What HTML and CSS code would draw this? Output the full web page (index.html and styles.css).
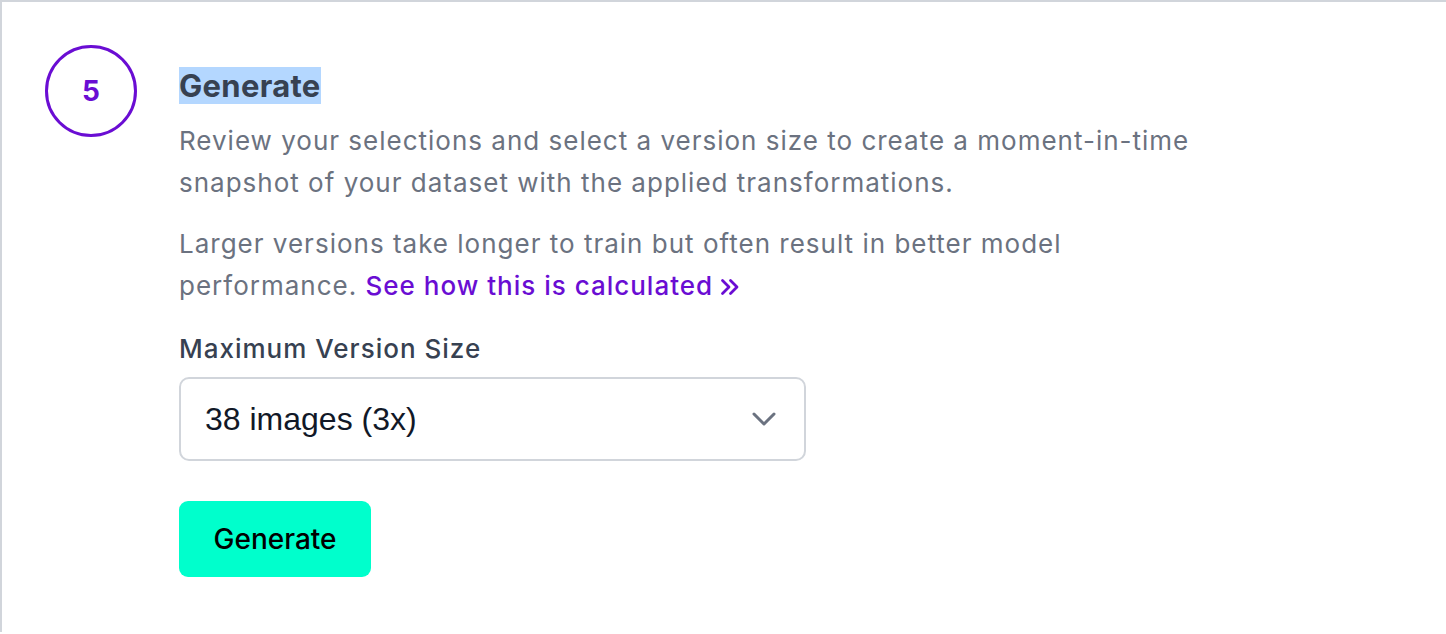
FILE: index.html
```html
<!DOCTYPE html>
<html lang="en">
<head>
<meta charset="utf-8">
<title>Generate</title>
<link rel="stylesheet" href="styles.css">
</head>
<body>
<section class="card">
  <div class="step">
    <div class="step-badge">5</div>
    <div class="step-body">
      <h2 class="step-title"><span class="selected">Generate</span></h2>
      <p class="text">Review your selections and select a version size to create a moment-in-time snapshot of your dataset with the applied transformations.</p>
      <p class="text">Larger versions take longer to train but often result in better model performance. <a class="link" href="#">See how this is calculated<svg class="link-icon" width="20" height="18" viewBox="0 0 20 18" fill="none"><path d="M2.5 2.5l6.5 6.5-6.5 6.5M10.5 2.5l6.5 6.5-6.5 6.5" stroke="currentColor" stroke-width="2.8" stroke-linecap="round" stroke-linejoin="round"/></svg></a></p>
      <label class="field-label">Maximum Version Size</label>
      <div class="select">
        <span class="select-value">38 images (3x)</span>
        <svg class="chevron" width="24" height="14" viewBox="0 0 24 14" fill="none"><path d="M2 2l10 10L22 2" stroke="#6b7280" stroke-width="3" stroke-linecap="round" stroke-linejoin="round"/></svg>
      </div>
      <button class="btn-generate" type="button">Generate</button>
    </div>
  </div>
</section>
</body>
</html>
```
FILE: styles.css
```css
html, body {
  margin: 0;
  padding: 0;
  background: #fff;
}
body {
  font-family: Inter, "Noto Sans", sans-serif;
  overflow: hidden;
}
.card {
  border-top: 2px solid #d1d5db;
  border-left: 2px solid #d1d5db;
  height: 632px;
  box-sizing: border-box;
}
.step {
  display: flex;
  align-items: flex-start;
  gap: 42px;
  padding: 43px 0 0 43px;
}
.step-badge {
  flex: none;
  width: 92px;
  height: 92px;
  box-sizing: border-box;
  border: 3px solid #6a0dd3;
  border-radius: 50%;
  display: flex;
  align-items: center;
  justify-content: center;
  color: #6a0dd3;
  font-size: 28px;
  font-weight: 700;
}
.step-body {
  width: 1016px;
  display: flex;
  flex-direction: column;
  align-items: flex-start;
}
.step-title {
  margin: 22px 0 16px;
  font-size: 31px;
  line-height: 37px;
  letter-spacing: 0.3px;
  font-weight: 700;
  color: #374151;
}
.selected {
  background: #b4d7ff;
}
.text {
  margin: 0 0 20px;
  font-size: 26px;
  letter-spacing: 1px;
  line-height: 42px;
  color: #6b7280;
}
.text + .text {
  margin-top: -1px;
}
.link {
  color: #6a0dd3;
  font-weight: 500;
  text-decoration: none;
}
.link-icon {
  margin-left: 7px;
  vertical-align: -1px;
}
.field-label {
  margin-top: 1px;
  font-size: 26px;
  letter-spacing: 1px;
  line-height: 42px;
  font-weight: 500;
  color: #374151;
}
.select {
  margin-top: 7px;
  width: 627px;
  height: 84px;
  flex: none;
  box-sizing: border-box;
  border: 2px solid #d1d5db;
  border-radius: 10px;
  display: flex;
  align-items: center;
  justify-content: space-between;
  padding: 0 28px 0 24px;
}
.select-value {
  font-family: "Liberation Sans", Arial, sans-serif;
  font-size: 32px;
  color: #111827;
}
.btn-generate {
  margin-top: 40px;
  width: 192px;
  height: 76px;
  flex: none;
  border: none;
  border-radius: 9px;
  background: #00ffcc;
  color: #000;
  font-family: Inter, sans-serif;
  font-size: 28px;
  font-weight: 500;
}
```
